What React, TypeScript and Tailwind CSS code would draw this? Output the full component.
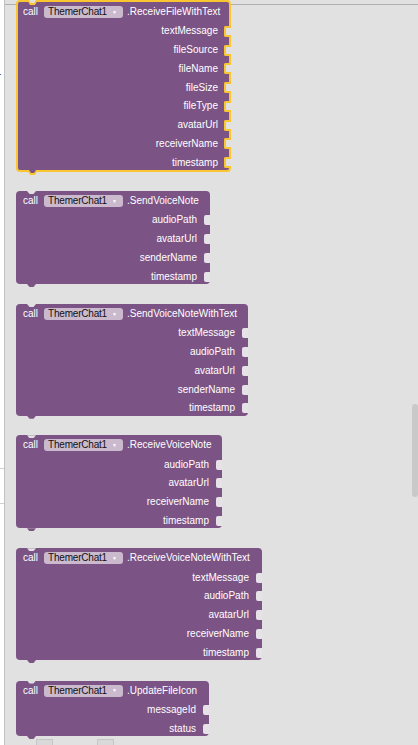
import React from 'react'

type BlockDef = {
  name: string
  inputs: string[]
  box: string
  selected?: boolean
}

// blocks on the workspace, top to bottom
const blocks: BlockDef[] = [
  {
    name: '.ReceiveFileWithText',
    box: 'mt-0 w-[215px]',
    selected: true,
    inputs: ['textMessage', 'fileSource', 'fileName', 'fileSize', 'fileType', 'avatarUrl', 'receiverName', 'timestamp'],
  },
  {
    name: '.SendVoiceNote',
    box: 'mt-[19px] w-[194px]',
    inputs: ['audioPath', 'avatarUrl', 'senderName', 'timestamp'],
  },
  {
    name: '.SendVoiceNoteWithText',
    box: 'mt-[20px] w-[232px]',
    inputs: ['textMessage', 'audioPath', 'avatarUrl', 'senderName', 'timestamp'],
  },
  {
    name: '.ReceiveVoiceNote',
    box: 'mt-[19.5px] w-[206px]',
    inputs: ['audioPath', 'avatarUrl', 'receiverName', 'timestamp'],
  },
  {
    name: '.ReceiveVoiceNoteWithText',
    box: 'mt-[20px] w-[246px]',
    inputs: ['textMessage', 'audioPath', 'avatarUrl', 'receiverName', 'timestamp'],
  },
  {
    name: '.UpdateFileIcon',
    box: 'mt-[20.5px] w-[193px]',
    inputs: ['messageId', 'status'],
  },
]

const trapezoid = '[clip-path:polygon(0_0,100%_0,72%_100%,28%_100%)]'

function Block({ block }: { block: BlockDef }) {
  const sel = !!block.selected

  return (
    <div
      className={`relative shrink-0 rounded-[4px] bg-[#7c5385] ${block.box} ${
        sel ? 'border-2 border-[#f9c530]' : ''
      }`}
    >
      {/* previous-statement dip */}
      {sel ? (
        <>
          <div className={`absolute -top-[2px] left-[9px] h-[5px] w-[11px] bg-[#f9c530] ${trapezoid}`} />
          <div className={`absolute -top-[2px] left-[11px] h-[3px] w-[7px] bg-[#e1e1e1] ${trapezoid}`} />
        </>
      ) : (
        <div className={`absolute top-0 left-[11px] h-[3px] w-[9px] bg-[#e1e1e1] ${trapezoid}`} />
      )}

      {/* header */}
      <div
        className={`flex h-[20px] items-center whitespace-nowrap text-white ${
          sel ? 'pl-[5px]' : 'pl-[7px]'
        }`}
      >
        <span>call</span>
        <span className="ml-[6px] flex h-[12px] w-[79px] shrink-0 items-center justify-between rounded-[3px] bg-[#cbbace] pl-[4px] pr-[6px] text-[#111]">
          <span className="tracking-[-0.2px]">ThemerChat1</span>
          <span className="text-[5px] leading-none text-white">▼</span>
        </span>
        <span className="ml-[4px]">{block.name}</span>
      </div>

      {/* value inputs */}
      <div className="-mb-[2px]">
        {block.inputs.map((input) => (
          <div
            key={input}
            className="flex h-[18.75px] items-center justify-end whitespace-nowrap text-white"
          >
            <span>{input}</span>
            {sel ? (
              <div className="-mr-[2px] ml-[6px] h-[11px] w-[7px] rounded-l-[2px] border-2 border-r-0 border-[#f9c530] bg-[#e1e1e1]" />
            ) : (
              <div className="ml-[7px] h-[10px] w-[6px] rounded-l-[2px] bg-[#e6e2e8]" />
            )}
          </div>
        ))}
      </div>

      {/* next-statement tab */}
      {sel ? (
        <>
          <div className={`absolute top-full left-[9px] h-[5px] w-[11px] bg-[#f9c530] ${trapezoid}`} />
          <div className={`absolute top-full left-[11px] h-[3px] w-[7px] bg-[#7c5385] ${trapezoid}`} />
        </>
      ) : (
        <div className={`absolute top-full left-[11px] h-[3px] w-[9px] bg-[#7c5385] ${trapezoid}`} />
      )}
    </div>
  )
}

export default function App() {
  return (
    <div className="flex h-[745px] w-[418px] overflow-hidden bg-white font-['Liberation_Sans',Arial,sans-serif] text-[10px] leading-[12px]">
      {/* left edge of the palette */}
      <div className="flex w-[4px] shrink-0 flex-col overflow-hidden">
        <div className="-ml-[3px] mt-[70px] text-[12px] leading-[14px] text-[#444]">r</div>
        <div className="mt-[384px] h-px bg-[#d0d0d0]" />
        <div className="mt-[34px] h-px bg-[#d0d0d0]" />
      </div>
      <div className="w-px shrink-0 bg-[#c2c2c2]" />

      {/* workspace */}
      <div className="relative flex-1 bg-[#e1e1e1]">
        {/* edge of the toolbar above, behind the blocks */}
        <div className="absolute inset-x-0 top-[4px] h-px bg-[#b0b0b0]" />

        <div className="flex flex-col pl-[11px]">
          {blocks.map((b) => (
            <Block key={b.name} block={b} />
          ))}
        </div>

        {/* partly visible shapes below the last block */}
        <div className="absolute left-[31px] top-[739px] h-[8px] w-[17px] border-x border-t border-[#c6c6c6] bg-[#d9d9d9]" />
        <div className="absolute left-[92px] top-[739px] h-[8px] w-[17px] border-x border-t border-[#c6c6c6] bg-[#d9d9d9]" />

        {/* vertical scrollbar thumb */}
        <div className="absolute right-0 top-[404px] h-[93px] w-[6px] rounded-[3px] bg-[#c9c9c9]" />
      </div>
    </div>
  )
}
